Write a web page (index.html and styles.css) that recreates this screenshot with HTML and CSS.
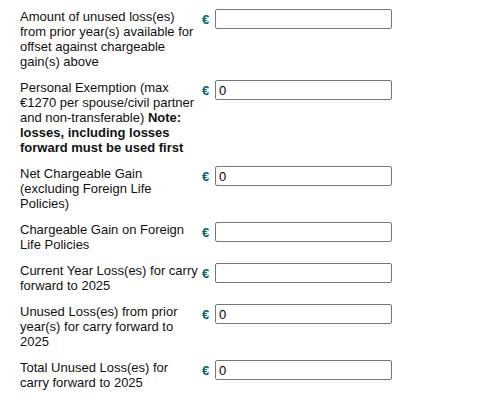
FILE: index.html
```html
<!DOCTYPE html>
<html>
<head>
<meta charset="utf-8">
<link rel="stylesheet" href="styles.css">
</head>
<body>
<div class="form">
  <div class="row">
    <div class="label">Amount of unused loss(es) from prior year(s) available for offset against chargeable gain(s) above</div>
    <div class="cur">€</div>
    <input class="field" type="text" value="">
  </div>
  <div class="row">
    <div class="label">Personal Exemption (max €1270 per spouse/civil partner and non-transferable) <b>Note: losses, including losses forward must be used first</b></div>
    <div class="cur">€</div>
    <input class="field" type="text" value="0">
  </div>
  <div class="row">
    <div class="label">Net Chargeable Gain (excluding Foreign Life Policies)</div>
    <div class="cur">€</div>
    <input class="field" type="text" value="0">
  </div>
  <div class="row">
    <div class="label">Chargeable Gain on Foreign Life Policies</div>
    <div class="cur">€</div>
    <input class="field" type="text" value="">
  </div>
  <div class="row">
    <div class="label"><span class="nowrap">Current Year Loss(es) for carry</span> forward to 2025</div>
    <div class="cur">€</div>
    <input class="field" type="text" value="">
  </div>
  <div class="row">
    <div class="label">Unused Loss(es) from prior year(s) for carry forward to 2025</div>
    <div class="cur">€</div>
    <input class="field" type="text" value="0">
  </div>
  <div class="row">
    <div class="label">Total Unused Loss(es) for carry forward to 2025</div>
    <div class="cur">€</div>
    <input class="field" type="text" value="0">
  </div>
</div>
</body>
</html>
```
FILE: styles.css
```css
html, body {
  margin: 0;
  padding: 0;
  background: #ffffff;
}
body {
  font-family: "Liberation Sans", Arial, sans-serif;
  font-size: 13px;
  line-height: 15px;
  color: #111111;
}
.form {
  display: flex;
  flex-direction: column;
  gap: 11px;
  padding: 9px 0 0 20px;
}
.row {
  display: grid;
  grid-template-columns: 182px 13px 177px;
  align-items: start;
}
.label {
  padding-right: 5px;
}
.nowrap {
  white-space: nowrap;
}
.cur {
  font-weight: bold;
  color: #00666b;
  line-height: 20px;
  padding-top: 1px;
}
.field {
  box-sizing: border-box;
  width: 177px;
  height: 20px;
  margin: 0;
  border: 1px solid #767676;
  border-radius: 2px;
  padding: 0 3px;
  font-family: "Liberation Sans", Arial, sans-serif;
  font-size: 13px;
  color: #000000;
  background: #ffffff;
}
```
